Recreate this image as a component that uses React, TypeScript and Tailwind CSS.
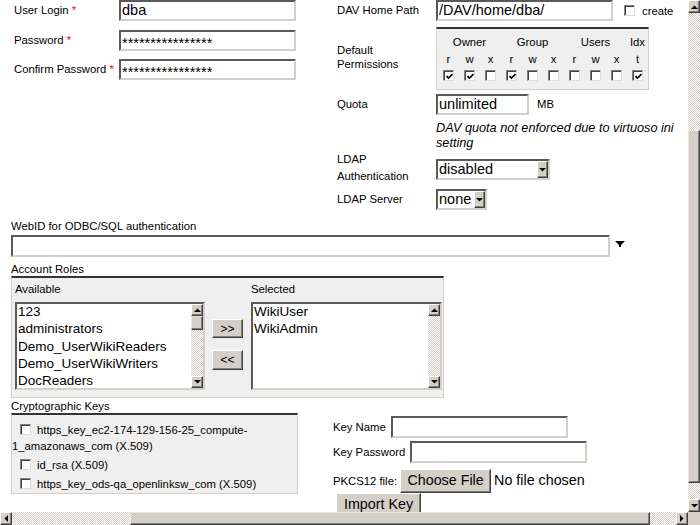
import type { ReactNode } from 'react';

const checker =
  'bg-[image:repeating-conic-gradient(#d4d0c8_0%_25%,#ffffff_0%_50%)] bg-[length:2px_2px]';

function Tri({ dir = 'down' }: { dir?: 'up' | 'down' | 'left' | 'right' }) {
  const pts = {
    up: '0,4 7,4 3.5,0.5',
    down: '0,0 7,0 3.5,3.5',
    left: '4,0 4,7 0.5,3.5',
    right: '0,0 0,7 3.5,3.5',
  }[dir];
  const vertical = dir === 'up' || dir === 'down';
  return (
    <svg width={vertical ? 7 : 4} height={vertical ? 4 : 7} viewBox={vertical ? '0 0 7 4' : '0 0 4 7'}>
      <polygon points={pts} fill="#000" />
    </svg>
  );
}

function ArrowBtn({ dir, className = '' }: { dir: 'up' | 'down' | 'left' | 'right'; className?: string }) {
  return (
    <div
      className={
        'flex items-center justify-center bg-[#d4d0c8] border border-t-white border-l-white border-r-[#404040] border-b-[#404040] shadow-[inset_-1px_-1px_0_#808080] shrink-0 ' +
        className
      }
    >
      <Tri dir={dir} />
    </div>
  );
}

function Thumb({ className = '' }: { className?: string }) {
  return (
    <div
      className={
        'bg-[#d4d0c8] border border-t-[#e8e6e1] border-l-[#e8e6e1] border-r-[#404040] border-b-[#404040] shadow-[inset_-1px_-1px_0_#808080] shrink-0 ' +
        className
      }
    />
  );
}

function Inp({ value = '', className = '', pw }: { value?: string; className?: string; pw?: boolean }) {
  return (
    <div
      className={
        'bg-white border-2 border-t-[#5a5a5a] border-l-[#5a5a5a] border-r-[#d4d0c8] border-b-[#d4d0c8] text-[14.5px] pl-[1px] overflow-hidden whitespace-nowrap shrink-0 ' +
        (pw ? 'leading-[23px] ' : 'leading-[17px] ') +
        className
      }
    >
      {value}
    </div>
  );
}

function Sel({ value, className = '' }: { value: string; className?: string }) {
  return (
    <div
      className={
        'h-[21px] bg-white border-2 border-t-[#5a5a5a] border-l-[#5a5a5a] border-r-[#d4d0c8] border-b-[#d4d0c8] flex shrink-0 ' +
        className
      }
    >
      <span className="flex-1 text-[14.5px] leading-[17px] pl-[1px] whitespace-nowrap">{value}</span>
      <ArrowBtn dir="down" className="w-[11px] h-[17px]" />
    </div>
  );
}

function Box({ on, className = '' }: { on?: boolean; className?: string }) {
  return (
    <span
      className={
        'inline-flex w-[11px] h-[11px] bg-white border border-t-[#808080] border-l-[#808080] border-r-[#e0ddd6] border-b-[#e0ddd6] shadow-[inset_1px_1px_0_#404040] items-center justify-center shrink-0 ' +
        className
      }
    >
      {on && (
        <svg width="7" height="7" viewBox="0 0 7 7" className="ml-[1px] mt-[1px]">
          <path d="M0.5 3 L2.5 5 L6.5 1" stroke="#000" strokeWidth="1.6" fill="none" />
        </svg>
      )}
    </span>
  );
}

function Btn({ children, className = '' }: { children: ReactNode; className?: string }) {
  return (
    <div
      className={
        'flex items-center justify-center bg-[#d4d0c8] border border-t-white border-l-white border-r-[#404040] border-b-[#404040] shadow-[inset_-1px_-1px_0_#808080] whitespace-nowrap shrink-0 ' +
        className
      }
    >
      {children}
    </div>
  );
}

function Req({ children }: { children: ReactNode }) {
  return (
    <span>
      {children} <span className="text-[#ff0000]">*</span>
    </span>
  );
}

function ListBox({ items, thumb, className = '' }: { items: string[]; thumb?: boolean; className?: string }) {
  return (
    <div
      className={
        'h-[88px] bg-white border-2 border-t-[#5a5a5a] border-l-[#5a5a5a] border-r-[#d4d0c8] border-b-[#d4d0c8] flex ' +
        className
      }
    >
      <div className="flex-1 overflow-hidden text-[13.5px] leading-[17.3px] pl-[1px] -mt-[1px]">
        {items.map((it) => (
          <div key={it} className="whitespace-nowrap">
            {it}
          </div>
        ))}
      </div>
      <div className="w-[12px] flex flex-col">
        <ArrowBtn dir="up" className="h-[12px]" />
        {thumb && <Thumb className="h-[14px]" />}
        <div className={'flex-1 ' + checker} />
        <ArrowBtn dir="down" className="h-[12px]" />
      </div>
    </div>
  );
}

export default function App() {
  const letters = ['r', 'w', 'x', 'r', 'w', 'x', 'r', 'w', 'x', 't'];
  const checks = [true, true, false, true, false, false, false, false, false, true];

  return (
    <div className="w-[700px] h-[525px] overflow-hidden bg-white flex flex-col font-['Liberation_Sans',Arial,sans-serif] text-black text-[11.3px]">
      <div className="flex h-[512px]">
        <div className="w-[688px] h-[512px] overflow-hidden">
          {/* Top two columns */}
          <div className="flex">
            <div className="w-[330px] pl-[14px] flex flex-col">
              <div className="flex items-center">
                <span className="w-[105px]">
                  <Req>User Login</Req>
                </span>
                <Inp className="w-[177px] h-[21px]" value="dba" />
              </div>
              <div className="flex items-center mt-[9px]">
                <span className="w-[105px]">
                  <Req>Password</Req>
                </span>
                <Inp pw className="w-[177px] h-[21px]" value="****************" />
              </div>
              <div className="flex items-center mt-[8px]">
                <span className="w-[105px]">
                  <Req>Confirm Password</Req>
                </span>
                <Inp pw className="w-[177px] h-[21px]" value="****************" />
              </div>
            </div>

            <div className="pl-[7px] flex flex-col">
              <div className="flex items-center h-[21px]">
                <span className="w-[99px]">DAV Home Path</span>
                <Inp className="w-[177px] h-[21px]" value="/DAV/home/dba/" />
                <Box className="ml-[11px] -mt-[1px]" />
                <span className="ml-[7px] mt-[2px]">create</span>
              </div>

              <div className="flex items-center mt-[6px]">
                <span className="w-[99px] leading-[14px] -mt-[3px]">
                  Default
                  <br />
                  Permissions
                </span>
                <div className="w-[213px] h-[63px] bg-[#efefef] border border-[#d4d0c8] border-t-2 border-t-[#333333] pl-[1px] pt-[6px]">
                  <div className="grid grid-cols-[repeat(10,21px)] text-center leading-[14px] h-[14px]">
                    <span className="col-span-3">Owner</span>
                    <span className="col-span-3">Group</span>
                    <span className="col-span-3">Users</span>
                    <span>Idx</span>
                  </div>
                  <div className="grid grid-cols-[repeat(10,21px)] text-center leading-[14px] h-[14px] mt-[3px]">
                    {letters.map((l, i) => (
                      <span key={i}>{l}</span>
                    ))}
                  </div>
                  <div className="grid grid-cols-[repeat(10,21px)] mt-[4px]">
                    {checks.map((c, i) => (
                      <span key={i} className="flex justify-center">
                        <Box on={c} />
                      </span>
                    ))}
                  </div>
                </div>
              </div>

              <div className="flex items-center mt-[4px]">
                <span className="w-[99px]">Quota</span>
                <Inp className="w-[93px] h-[21px]" value="unlimited" />
                <span className="ml-[8px]">MB</span>
              </div>

              <div className="ml-[99px] mt-[6px] w-[250px] italic text-[12.7px] leading-[15px]">
                DAV quota not enforced due to virtuoso ini setting
              </div>

              <div className="flex items-start">
                <span className="w-[99px] leading-[17px]">
                  LDAP
                  <br />
                  Authentication
                </span>
                <Sel className="w-[114px] mt-[8px]" value="disabled" />
              </div>

              <div className="flex items-center mt-[4px]">
                <span className="w-[99px]">LDAP Server</span>
                <Sel className="w-[51px]" value="none" />
              </div>
            </div>
          </div>

          {/* WebID */}
          <div className="pl-[11px] mt-[9px]">
            <div className="leading-[14px]">WebID for ODBC/SQL authentication</div>
            <div className="flex items-start mt-[2px]">
              <Inp className="w-[599px] h-[22px]" />
              <svg width="10" height="6" viewBox="0 0 10 6" className="ml-[5px] mt-[6px]">
                <polygon points="0,0 10,0 5,5" fill="#000" />
                <rect x="4" y="4" width="2" height="2" fill="#000" />
              </svg>
            </div>

            {/* Account Roles */}
            <div className="leading-[14px] mt-[5px]">Account Roles</div>
            <div className="w-[433px] h-[122px] bg-[#efefef] border border-[#d4d0c8] border-t-2 border-t-[#333333] pl-[3px] pt-[4px] flex">
              <div className="w-[190px]">
                <div className="leading-[14px]">Available</div>
                <ListBox
                  className="mt-[6px] w-[190px]"
                  thumb
                  items={['123', 'administrators', 'Demo_UserWikiReaders', 'Demo_UserWikiWriters', 'DocReaders']}
                />
              </div>
              <div className="ml-[7px] w-[31px] pt-[37px] flex flex-col">
                <Btn className="h-[19px] text-[12px]">&gt;&gt;</Btn>
                <Btn className="h-[20px] mt-[12px] text-[12px]">&lt;&lt;</Btn>
              </div>
              <div className="ml-[8px] w-[191px]">
                <div className="leading-[14px]">Selected</div>
                <ListBox className="mt-[6px] w-[191px]" items={['WikiUser', 'WikiAdmin']} />
              </div>
            </div>
          </div>

          {/* Cryptographic Keys */}
          <div className="flex mt-[1px]">
            <div className="pl-[11px] w-[298px] shrink-0">
              <div className="leading-[14px]">Cryptographic Keys</div>
              <div className="w-[287px] h-[81px] bg-[#efefef] border border-[#d4d0c8] border-t-2 border-t-[#333333] pt-[4px] leading-[16px]">
                <div className="mt-[3px]">
                  <Box className="ml-[8px] mr-[6px] align-[-1px]" />
                  https_key_ec2-174-129-156-25_compute-
                  <br />
                  1_amazonaws_com (X.509)
                </div>
                <div className="mt-[3px]">
                  <Box className="ml-[8px] mr-[6px] align-[-1px]" />
                  id_rsa (X.509)
                </div>
                <div className="mt-[3px]">
                  <Box className="ml-[8px] mr-[6px] align-[-1px]" />
                  https_key_ods-qa_openlinksw_com (X.509)
                </div>
              </div>
              <div className="mt-[18px] ml-[2px] w-[160px] h-[2px] bg-[#d4d0c8] border-r border-r-[#404040]" />
            </div>

            <div className="ml-[35px] pt-[17px] flex flex-col">
              <div className="flex items-center">
                <span>Key Name</span>
                <Inp className="w-[177px] h-[22px] ml-[5px]" />
              </div>
              <div className="flex items-center mt-[3px]">
                <span>Key Password</span>
                <Inp className="w-[177px] h-[22px] ml-[5px]" />
              </div>
              <div className="flex items-center mt-[6px]">
                <span>PKCS12 file:</span>
                <Btn className="ml-[3px] w-[91px] h-[24px] text-[14.3px]">Choose File</Btn>
                <span className="ml-[3px] text-[14.3px]">No file chosen</span>
              </div>
              <Btn className="ml-[3px] w-[85px] h-[24px] text-[14.3px]">Import Key</Btn>
            </div>
          </div>
        </div>

        {/* vertical scrollbar */}
        <div className="w-[12px] h-[512px] flex flex-col">
          <ArrowBtn dir="up" className="h-[13px]" />
          <div className={'h-[117px] ' + checker} />
          <Thumb className="h-[353px]" />
          <div className={'flex-1 ' + checker} />
          <ArrowBtn dir="down" className="h-[13px]" />
        </div>
      </div>

      {/* horizontal scrollbar */}
      <div className="flex h-[13px]">
        <ArrowBtn dir="left" className="w-[12px] h-[13px]" />
        <div className={'w-[118px] ' + checker} />
        <Thumb className="w-[520px] h-[13px]" />
        <div className={'flex-1 ' + checker} />
        <ArrowBtn dir="right" className="w-[12px] h-[13px]" />
        <div className="w-[12px] bg-[#d4d0c8]" />
      </div>
    </div>
  );
}
